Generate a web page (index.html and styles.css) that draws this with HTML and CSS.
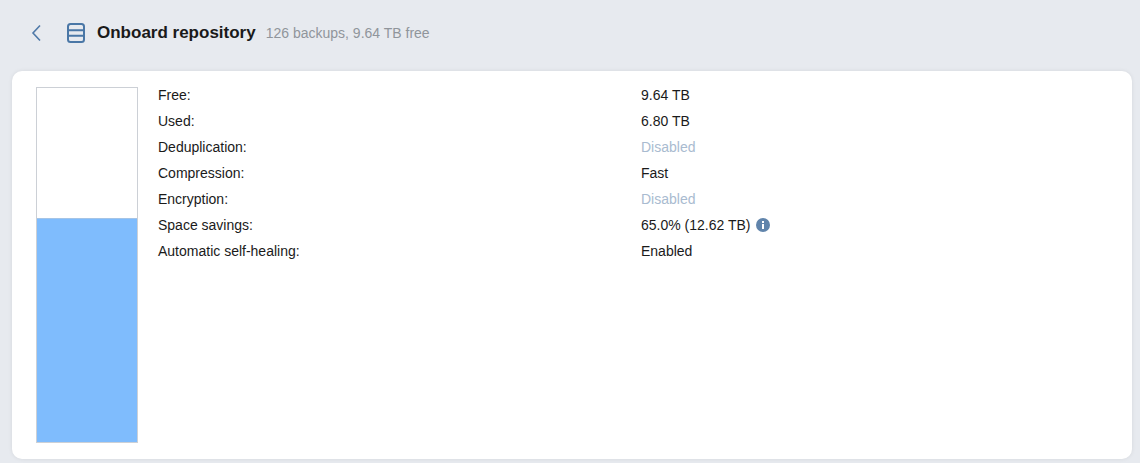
FILE: index.html
```html
<!DOCTYPE html>
<html lang="en">

<head>
    <meta charset="UTF-8">
    <title>Onboard repository</title>
    <link rel="stylesheet" href="styles.css">
</head>

<body>
    <div class="header">
        <svg class="back-icon" width="12" height="18" viewBox="0 0 12 18">
            <path d="M10 1.5 L3 9 L10 16.5" fill="none" stroke="#4f79a8" stroke-width="1.6" />
        </svg>
        <svg class="repo-icon" width="18" height="20" viewBox="0 0 18 20">
            <rect x="1" y="1" width="16" height="18" rx="2.5" fill="none" stroke="#4a77a6" stroke-width="2" />
            <path d="M1 7.3 H17 M1 12.7 H17" stroke="#4a77a6" stroke-width="2" />
        </svg>
        <h1>Onboard repository</h1>
        <span class="summary">126 backups, 9.64 TB free</span>
    </div>

    <div class="card">
        <div class="usage-bar">
            <div class="usage-fill"></div>
        </div>
        <div class="details">
            <div class="row"><span class="label">Free:</span><span>9.64 TB</span></div>
            <div class="row"><span class="label">Used:</span><span>6.80 TB</span></div>
            <div class="row"><span class="label">Deduplication:</span><span class="disabled">Disabled</span></div>
            <div class="row"><span class="label">Compression:</span><span>Fast</span></div>
            <div class="row"><span class="label">Encryption:</span><span class="disabled">Disabled</span></div>
            <div class="row">
                <span class="label">Space savings:</span>
                <span class="value-info">65.0% (12.62 TB)
                    <svg class="info-icon" width="14" height="14" viewBox="0 0 14 14">
                        <circle cx="7" cy="7" r="7" fill="#6084ab" />
                        <rect x="6" y="6" width="2" height="5" fill="#fff" />
                        <rect x="6" y="3" width="2" height="2" fill="#fff" />
                    </svg>
                </span>
            </div>
            <div class="row"><span class="label">Automatic self-healing:</span><span>Enabled</span></div>
        </div>
    </div>
</body>

</html>
```

FILE: styles.css
```css
html,
body {
    height: 100%;
}

body {
    font-family: 'Liberation Sans', Arial, sans-serif;
    font-size: 14px;
    color: #1a1a1a;
    background-color: #e7eaef;
    margin: 0;
    padding: 0 8px 4px 12px;
    box-sizing: border-box;
    display: flex;
    flex-direction: column;
    overflow: hidden;
}

.header {
    height: 71px;
    flex-shrink: 0;
    display: flex;
    align-items: center;
    padding-bottom: 6px;
    box-sizing: border-box;
}

.back-icon {
    margin-left: 18px;
}

.repo-icon {
    margin-left: 25px;
}

h1 {
    font-size: 17px;
    font-weight: bold;
    margin: 0 0 0 12px;
}

.summary {
    color: #90959b;
    margin-left: 10px;
}

.card {
    flex: 1;
    display: flex;
    background-color: #fff;
    border-radius: 10px;
    box-shadow: 0 0 4px rgba(0, 0, 0, 0.08);
    padding: 16px 24px;
}

.usage-bar {
    width: 100px;
    border: 1px solid #ccd0d6;
    display: flex;
    flex-direction: column;
    justify-content: flex-end;
}

.usage-fill {
    height: 223px;
    background-color: #7fbcfd;
    border-top: 1px solid #a5c4e6;
}

.details {
    margin-left: 20px;
    flex: 1;
}

.row {
    display: flex;
    height: 26px;
    line-height: 16px;
}

.label {
    width: 483px;
}

.disabled {
    color: #a9bbd0;
}

.value-info {
    display: flex;
    align-items: flex-start;
}

.info-icon {
    margin: 1px 0 0 6px;
}
```
